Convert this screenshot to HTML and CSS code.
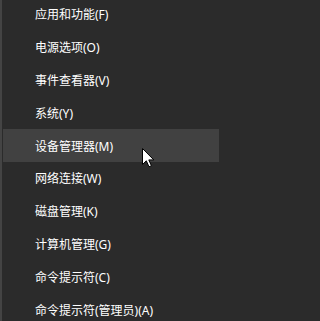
FILE: index.html
```html
<!DOCTYPE html>
<html lang="zh-CN">
<head>
<meta charset="utf-8">
<link rel="stylesheet" href="styles.css">
</head>
<body>
<div class="menu">
  <ul class="list">
    <li class="item">应用和功能(F)</li>
    <li class="item">电源选项(O)</li>
    <li class="item">事件查看器(V)</li>
    <li class="item">系统(Y)</li>
    <li class="item active">设备管理器(M)</li>
    <li class="item">网络连接(W)</li>
    <li class="item">磁盘管理(K)</li>
    <li class="item">计算机管理(G)</li>
    <li class="item">命令提示符(C)</li>
    <li class="item">命令提示符(管理员)(A)</li>
  </ul>
  <svg class="cursor" width="13" height="20" viewBox="0 0 13 20">
    <path d="M0.5 0.5 L0.5 16.5 L4.3 12.8 L7 18.8 L9.4 17.7 L6.8 11.9 L11.8 11.9 Z" fill="#fff" stroke="#000" stroke-width="1"/>
  </svg>
</div>
</body>
</html>
```
FILE: styles.css
```css
html, body {
  margin: 0;
  padding: 0;
  background: #2b2b2b;
}
.menu {
  position: relative;
  width: 219px;
  height: 321px;
  overflow: hidden;
  background: #2b2b2b;
  border-left: 2px solid #444444;
  box-sizing: border-box;
  padding-left: 1px;
  font-family: "Noto Sans", "Noto Sans CJK SC", sans-serif;
  font-size: 12px;
  color: #ffffff;
}
.list {
  list-style: none;
  margin: -2.5px 0 0 0;
  padding: 0;
}
.item {
  height: 32.9px;
  display: flex;
  align-items: center;
  padding-left: 32px;
  white-space: nowrap;
}
.item.active {
  background: #414141;
}
.cursor {
  position: absolute;
  left: 140px;
  top: 148px;
}
```
